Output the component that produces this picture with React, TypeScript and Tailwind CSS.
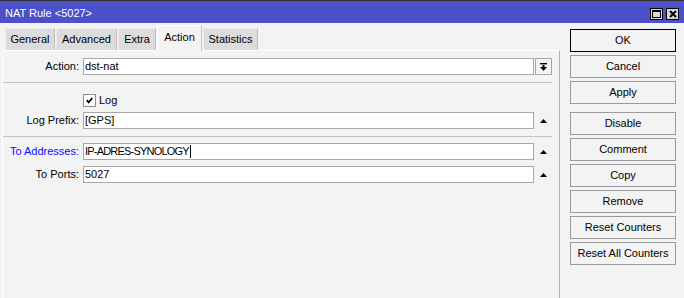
import React from 'react';

// Ventana "NAT Rule" estilo WinBox
const tabs = [
  { name: 'General', w: 'w-[50px]' },
  { name: 'Advanced', w: 'w-[61px]' },
  { name: 'Extra', w: 'w-[38px]' },
  { name: 'Action', w: 'w-[45px]', active: true },
  { name: 'Statistics', w: 'w-[55px]' },
];

function UpArrow() {
  return (
    <svg width="7" height="4" viewBox="0 0 7 4">
      <polygon points="0,4 7,4 3.5,0" fill="#000" />
    </svg>
  );
}

function DropIcon() {
  return (
    <svg width="7" height="8" viewBox="0 0 7 8">
      <rect x="0" y="0" width="7" height="1.4" fill="#000" />
      <rect x="2.5" y="2" width="2" height="2.5" fill="#000" />
      <polygon points="0,4 7,4 3.5,8" fill="#000" />
    </svg>
  );
}

function Row({ label, value, side, blue, caret, tight }: { label: string; value: string; side: React.ReactNode; blue?: boolean; caret?: boolean; tight?: boolean }) {
  return (
    <div className="flex items-center h-[17px]">
      <div className={`w-[76px] text-right whitespace-nowrap ${blue ? 'text-[#0a0aff]' : 'text-black'}`}>{label}</div>
      <div className="ml-[4px] w-[451px] h-[17px] border border-[#a8a8a8] bg-white pl-[1px] leading-[15px] flex items-center">
        <span className={tight ? 'tracking-[-0.8px]' : ''}>{value}</span>
        {caret && <span className="inline-block w-px h-[13px] bg-black ml-[1px]" />}
      </div>
      <div className="ml-[1px] w-[17px] h-[17px] flex items-center justify-center">{side}</div>
    </div>
  );
}

function Btn({ children, main, extra }: { children: React.ReactNode; main?: boolean; extra?: string }) {
  return (
    <div
      className={`h-[23px] w-[106px] flex items-center justify-center bg-[#f3f3f3] border ${main ? 'border-black' : 'border-[#9a9a9a]'} ${extra ?? ''}`}
    >
      {children}
    </div>
  );
}

function App() {
  return (
    <div className="w-[684px] h-[298px] overflow-hidden bg-[#f3f3f3] text-[11px] text-black font-['Liberation_Sans',Arial,sans-serif]">
      {/* barra de titulo */}
      <div className="h-[23px] border-t border-[#2d2d2d] bg-[#4c50c9] flex items-start pl-[5px] pr-[5px]">
        <div className="pt-[6px] leading-[13px] text-white">NAT Rule &lt;5027&gt;</div>
        <div className="ml-auto mt-[7px] flex gap-[3px]">
          <div className="w-[13px] h-[12px] bg-[#d8d8d8] border border-black flex items-center justify-center">
            <div className="w-[9px] h-[8px] border border-black border-t-2" />
          </div>
          <div className="w-[13px] h-[12px] bg-[#d8d8d8] border border-black flex items-center justify-center">
            <svg width="8" height="8" viewBox="0 0 8 8">
              <path d="M1 1 L7 7 M7 1 L1 7" stroke="#000" strokeWidth="2" />
            </svg>
          </div>
        </div>
      </div>

      <div className="flex">
        {/* panel izquierdo */}
        <div className="ml-[2px] w-[558px] flex flex-col">
          <div className="h-[27px] flex items-end pl-[3px] gap-px">
            {tabs.map((t) =>
              t.active ? (
                <div
                  key={t.name}
                  className={`${t.w} h-[26px] -mb-px relative z-10 bg-[#f3f3f3] border-l border-t border-white border-r border-r-[#c4c4c4] flex items-center justify-center pb-[2px]`}
                >
                  {t.name}
                </div>
              ) : (
                <div
                  key={t.name}
                  className={`${t.w} h-[22px] bg-[#dcdcdc] border-l border-t border-[#ececec] border-r border-r-[#bdbdbd] flex items-center justify-center`}
                >
                  {t.name}
                </div>
              )
            )}
          </div>

          <div className="h-[260px] border-l border-t border-white border-r border-r-[#b4b4b4] pt-[7px] pr-[7px]">
            <Row
              label="Action:"
              value="dst-nat"
              side={
                <div className="w-[17px] h-[17px] border border-[#a8a8a8] bg-[#f3f3f3] flex items-center justify-center">
                  <DropIcon />
                </div>
              }
            />
            <div className="mt-[7px] h-px w-[549px] bg-[#c2c2c2]" />

            <div className="mt-[11px] flex items-center h-[13px]">
              <div className="w-[76px]" />
              <div className="ml-[4px] w-[13px] h-[13px] border border-[#8e8e8e] bg-white flex items-center justify-center">
                <svg width="7" height="7" viewBox="0 0 7 7">
                  <path d="M0.8 3.2 L2.7 5.3 L6.3 1" stroke="#000" strokeWidth="1.8" fill="none" />
                </svg>
              </div>
              <span className="ml-[3px]">Log</span>
            </div>

            <div className="mt-[5px]">
              <Row label="Log Prefix:" value="[GPS]" side={<UpArrow />} />
            </div>
            <div className="mt-[7px] h-px w-[549px] bg-[#c2c2c2]" />

            <div className="mt-[6px]">
              <Row label="To Addresses:" value="IP-ADRES-SYNOLOGY" side={<UpArrow />} blue caret tight />
            </div>
            <div className="mt-[6px]">
              <Row label="To Ports:" value="5027" side={<UpArrow />} />
            </div>
          </div>
        </div>

        {/* botones */}
        <div className="ml-[10px] pt-[6px] flex flex-col gap-[3px]">
          <Btn main>OK</Btn>
          <Btn>Cancel</Btn>
          <Btn>Apply</Btn>
          <Btn extra="mt-[5px]">Disable</Btn>
          <Btn>Comment</Btn>
          <Btn>Copy</Btn>
          <Btn>Remove</Btn>
          <Btn>Reset Counters</Btn>
          <Btn>Reset All Counters</Btn>
        </div>
      </div>
    </div>
  );
}

export default App;
